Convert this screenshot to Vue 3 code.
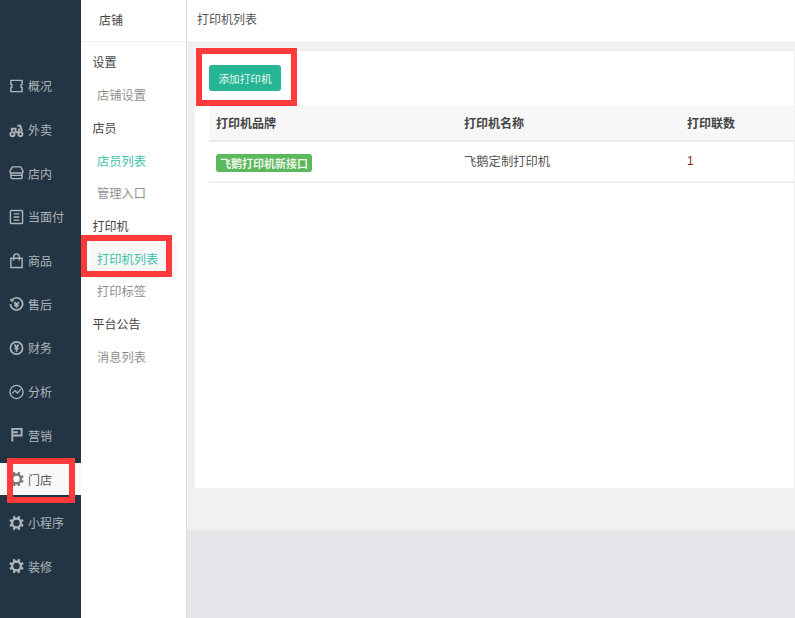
<script setup>
function gearPath() {
  const cx = 8, cy = 8.5, teeth = 8
  const pts = []
  for (let i = 0; i < teeth; i++) {
    const a = (i / teeth) * Math.PI * 2 + Math.PI / 8
    const step = (Math.PI * 2) / teeth
    const spots = [
      [a - step * 0.3, 5.9],
      [a - step * 0.17, 7.9],
      [a + step * 0.17, 7.9],
      [a + step * 0.3, 5.9]
    ]
    for (const [ang, r] of spots) {
      pts.push((cx + Math.cos(ang) * r).toFixed(2) + ' ' + (cy + Math.sin(ang) * r).toFixed(2))
    }
  }
  return 'M' + pts.join('L') + 'Z M8 5.1a3.4 3.4 0 1 0 0 6.8a3.4 3.4 0 1 0 0-6.8Z'
}
const gear = gearPath()
const nav = [
  { t: '概况', w: 1.5, d: 'M2 7.500V2.500h12v5M2 9.500v5h12v-5M4 7.500H2M12 7.500h2M4 9.500H2M12 9.500h2' },
  { t: '外卖', w: 2, d: 'M1.500 13a2.200 2.200 0 1 0 4.400 0a2.200 2.200 0 1 0-4.400 0M10 13a2.200 2.200 0 1 0 4.400 0a2.200 2.200 0 1 0-4.400 0M3 9.500V7h4v4M9 4h3l2 6M7 11h3l1-4' },
  { t: '店内', w: 1.5, d: 'M3.500 2h9l2.500 4.500a2 2 0 0 1-2 2H3a2 2 0 0 1-2-2zM2 8.500v4.500a1.500 1.500 0 0 0 1.500 1.500h9A1.500 1.500 0 0 0 14 13V8.500M2 11h12' },
  { t: '当面付', w: 1.5, d: 'M2.500 1.500h11a1 1 0 0 1 1 1v12a1 1 0 0 1-1 1h-11a1 1 0 0 1-1-1v-12a1 1 0 0 1 1-1zM5 5.200h6M5 8.500h6M5 11.800h6' },
  { t: '商品', w: 1.5, d: 'M2 5.500h12v10H2zM5 8V4a3 3 0 0 1 6 0v4' },
  { t: '售后', w: 1.800, d: 'M3 4.200A6.500 6.500 0 1 1 1.500 8.500M1.500 3.500L3 5l2-.5M5.500 6.500L8 9l2.500-2.500M8 9v3.500M5.500 10h5' },
  { t: '财务', w: 1.800, d: 'M1.500 8.500a6.500 6.500 0 1 0 13 0a6.500 6.500 0 1 0-13 0M5.800 4.800L8 8l2.200-3.200M8 8v4.500M5.500 9h5' },
  { t: '分析', w: 1.400, d: 'M1 8.500a7 7 0 1 0 14 0a7 7 0 1 0-14 0M3.500 10L6.500 7l2.500 2.500l3.500-4' },
  { t: '营销', w: 2, d: 'M3.500 15.500V2h10v7h-10M3.500 5.500h6' },
  { t: '门店', solid: true, d: gear, active: true },
  { t: '小程序', solid: true, d: gear },
  { t: '装修', solid: true, d: gear }
]
const groups = [
  { t: '设置', items: [{ t: '店铺设置' }] },
  { t: '店员', items: [{ t: '店员列表', on: true }, { t: '管理入口' }] },
  { t: '打印机', items: [{ t: '打印机列表', on: true, bg: true }, { t: '打印标签' }] },
  { t: '平台公告', items: [{ t: '消息列表' }] }
]
</script>

<template>
  <div class="page">
    <aside class="nav">
      <div v-for="n in nav" :key="n.t" class="nav-item" :class="{ active: n.active }">
        <svg v-if="n.solid" class="ico" viewBox="0 0 16 17" width="15" height="16">
          <path :d="n.d" fill="currentColor" fill-rule="evenodd" />
        </svg>
        <svg v-else class="ico" viewBox="0 0 16 17" width="15" height="16" fill="none" stroke="currentColor" :stroke-width="n.w">
          <path :d="n.d" />
        </svg>
        <span>{{ n.t }}</span>
      </div>
    </aside>
    <aside class="sub">
      <div class="sub-title">店铺</div>
      <div class="sub-body">
        <template v-for="g in groups" :key="g.t">
          <div class="sub-group">{{ g.t }}</div>
          <div
            v-for="i in g.items"
            :key="i.t"
            class="sub-item"
            :class="{ on: i.on, bg: i.bg }"
          >{{ i.t }}</div>
        </template>
      </div>
    </aside>
    <main class="main">
      <header class="head">打印机列表</header>
      <div class="content">
        <section class="card">
          <button class="add">添加打印机</button>
          <div class="row th">
            <div>打印机品牌</div>
            <div>打印机名称</div>
            <div>打印联数</div>
          </div>
          <div class="row td">
            <div class="tag-cell"><span class="tag">飞鹅打印机新接口</span></div>
            <div class="name">飞鹅定制打印机</div>
            <div class="num">1</div>
          </div>
        </section>
      </div>
      <div class="foot"></div>
    </main>
    <i class="mark m1"></i>
    <i class="mark m2"></i>
    <i class="mark m3"></i>
  </div>
</template>

<style>
html, body { margin: 0; background: #fff; overflow: hidden; }
</style>

<style scoped>
.page {
  position: relative;
  display: flex;
  width: 795px;
  height: 618px;
  overflow: hidden;
  font-family: "Noto Sans CJK SC", "Noto Sans", sans-serif;
  font-size: 12px;
  color: #555;
}
.nav {
  width: 81px;
  flex: none;
  box-sizing: border-box;
  padding-top: 64px;
  background: #233544;
}
.nav-item {
  height: 43.7px;
  display: flex;
  align-items: center;
  gap: 4px;
  padding-left: 9px;
  color: #aeb5ba;
}
.nav-item.active {
  background: #f8f8f8;
  color: #555;
  height: 32px;
  margin: 6px 0 5.7px;
}
.nav-item.active .ico { color: #777; }
.ico { flex: none; }
.sub {
  width: 106px;
  flex: none;
  box-sizing: border-box;
  background: #fff;
  border-right: 1px solid #dcdcdc;
}
.sub-title {
  height: 41px;
  line-height: 40px;
  padding-left: 18px;
  border-bottom: 1px solid #eee;
  color: #444;
}
.sub-body { padding-top: 4px; }
.sub-group {
  height: 33px;
  line-height: 31px;
  padding-left: 11.5px;
  color: #444;
}
.sub-item {
  height: 32.5px;
  line-height: 32.5px;
  color: #8f8f8f;
  font-size: 12.25px;
  margin: 0 9px;
  padding-left: 7px;
}
.sub-item.on { color: #3cc4ab; }
.sub-item.bg { background: #f7f7f7; }
.main {
  flex: 1;
  min-width: 0;
  display: flex;
  flex-direction: column;
}
.head {
  height: 42px;
  flex: none;
  line-height: 38px;
  padding-left: 10px;
  background: #fff;
  border-bottom: 1px solid #e8e8e8;
  color: #555;
}
.content {
  height: 487px;
  flex: none;
  box-sizing: border-box;
  background: #f1f1f1;
  padding: 7px 1px 0 8px;
}
.card {
  height: 438px;
  box-sizing: border-box;
  background: #fff;
  padding: 14px 0 0 14px;
  border-top: 1px solid #e9e9e9;
}
.add {
  display: block;
  width: 72px;
  height: 26px;
  padding: 0;
  border: 0;
  border-radius: 3px;
  background: #26b595;
  color: #e9f8f4;
  font: inherit;
  font-size: 10.6px;
}
.row {
  display: grid;
  grid-template-columns: 248px 223px 1fr;
  padding-left: 7px;
  align-items: center;
  color: #555;
  box-sizing: border-box;
}
.th {
  margin-top: 14px;
  height: 37px;
  padding-bottom: 1px;
  background: #f7f7f7;
  border-bottom: 2px solid #ececec;
  font-weight: 700;
  color: #444;
}
.td {
  height: 41px;
  padding-bottom: 1px;
  border-bottom: 2px solid #eee;
}
.tag-cell { display: flex; margin-top: 3px; }
.name { font-size: 12.3px; line-height: 16px; margin-top: -1px; }
.num { color: #7a2f24; font-family: "Liberation Sans", sans-serif; font-size: 12px; }
.tag {
  width: 96px;
  height: 18px;
  line-height: 18px;
  border-radius: 3px;
  background: #5cb85c;
  color: #eaf6ea;
  font-size: 11px;
  font-weight: 700;
  text-align: center;
}
.foot { flex: 1; background: #e5e6e9; }
.mark {
  position: absolute;
  box-sizing: border-box;
  border: 6px solid #ff3a3a;
  pointer-events: none;
}
.m1 { left: 196px; top: 48px; width: 101px; height: 58px; }
.m2 { left: 81px; top: 235px; width: 91px; height: 42px; }
.m3 { left: 7px; top: 458px; width: 68px; height: 45px; }
</style>
